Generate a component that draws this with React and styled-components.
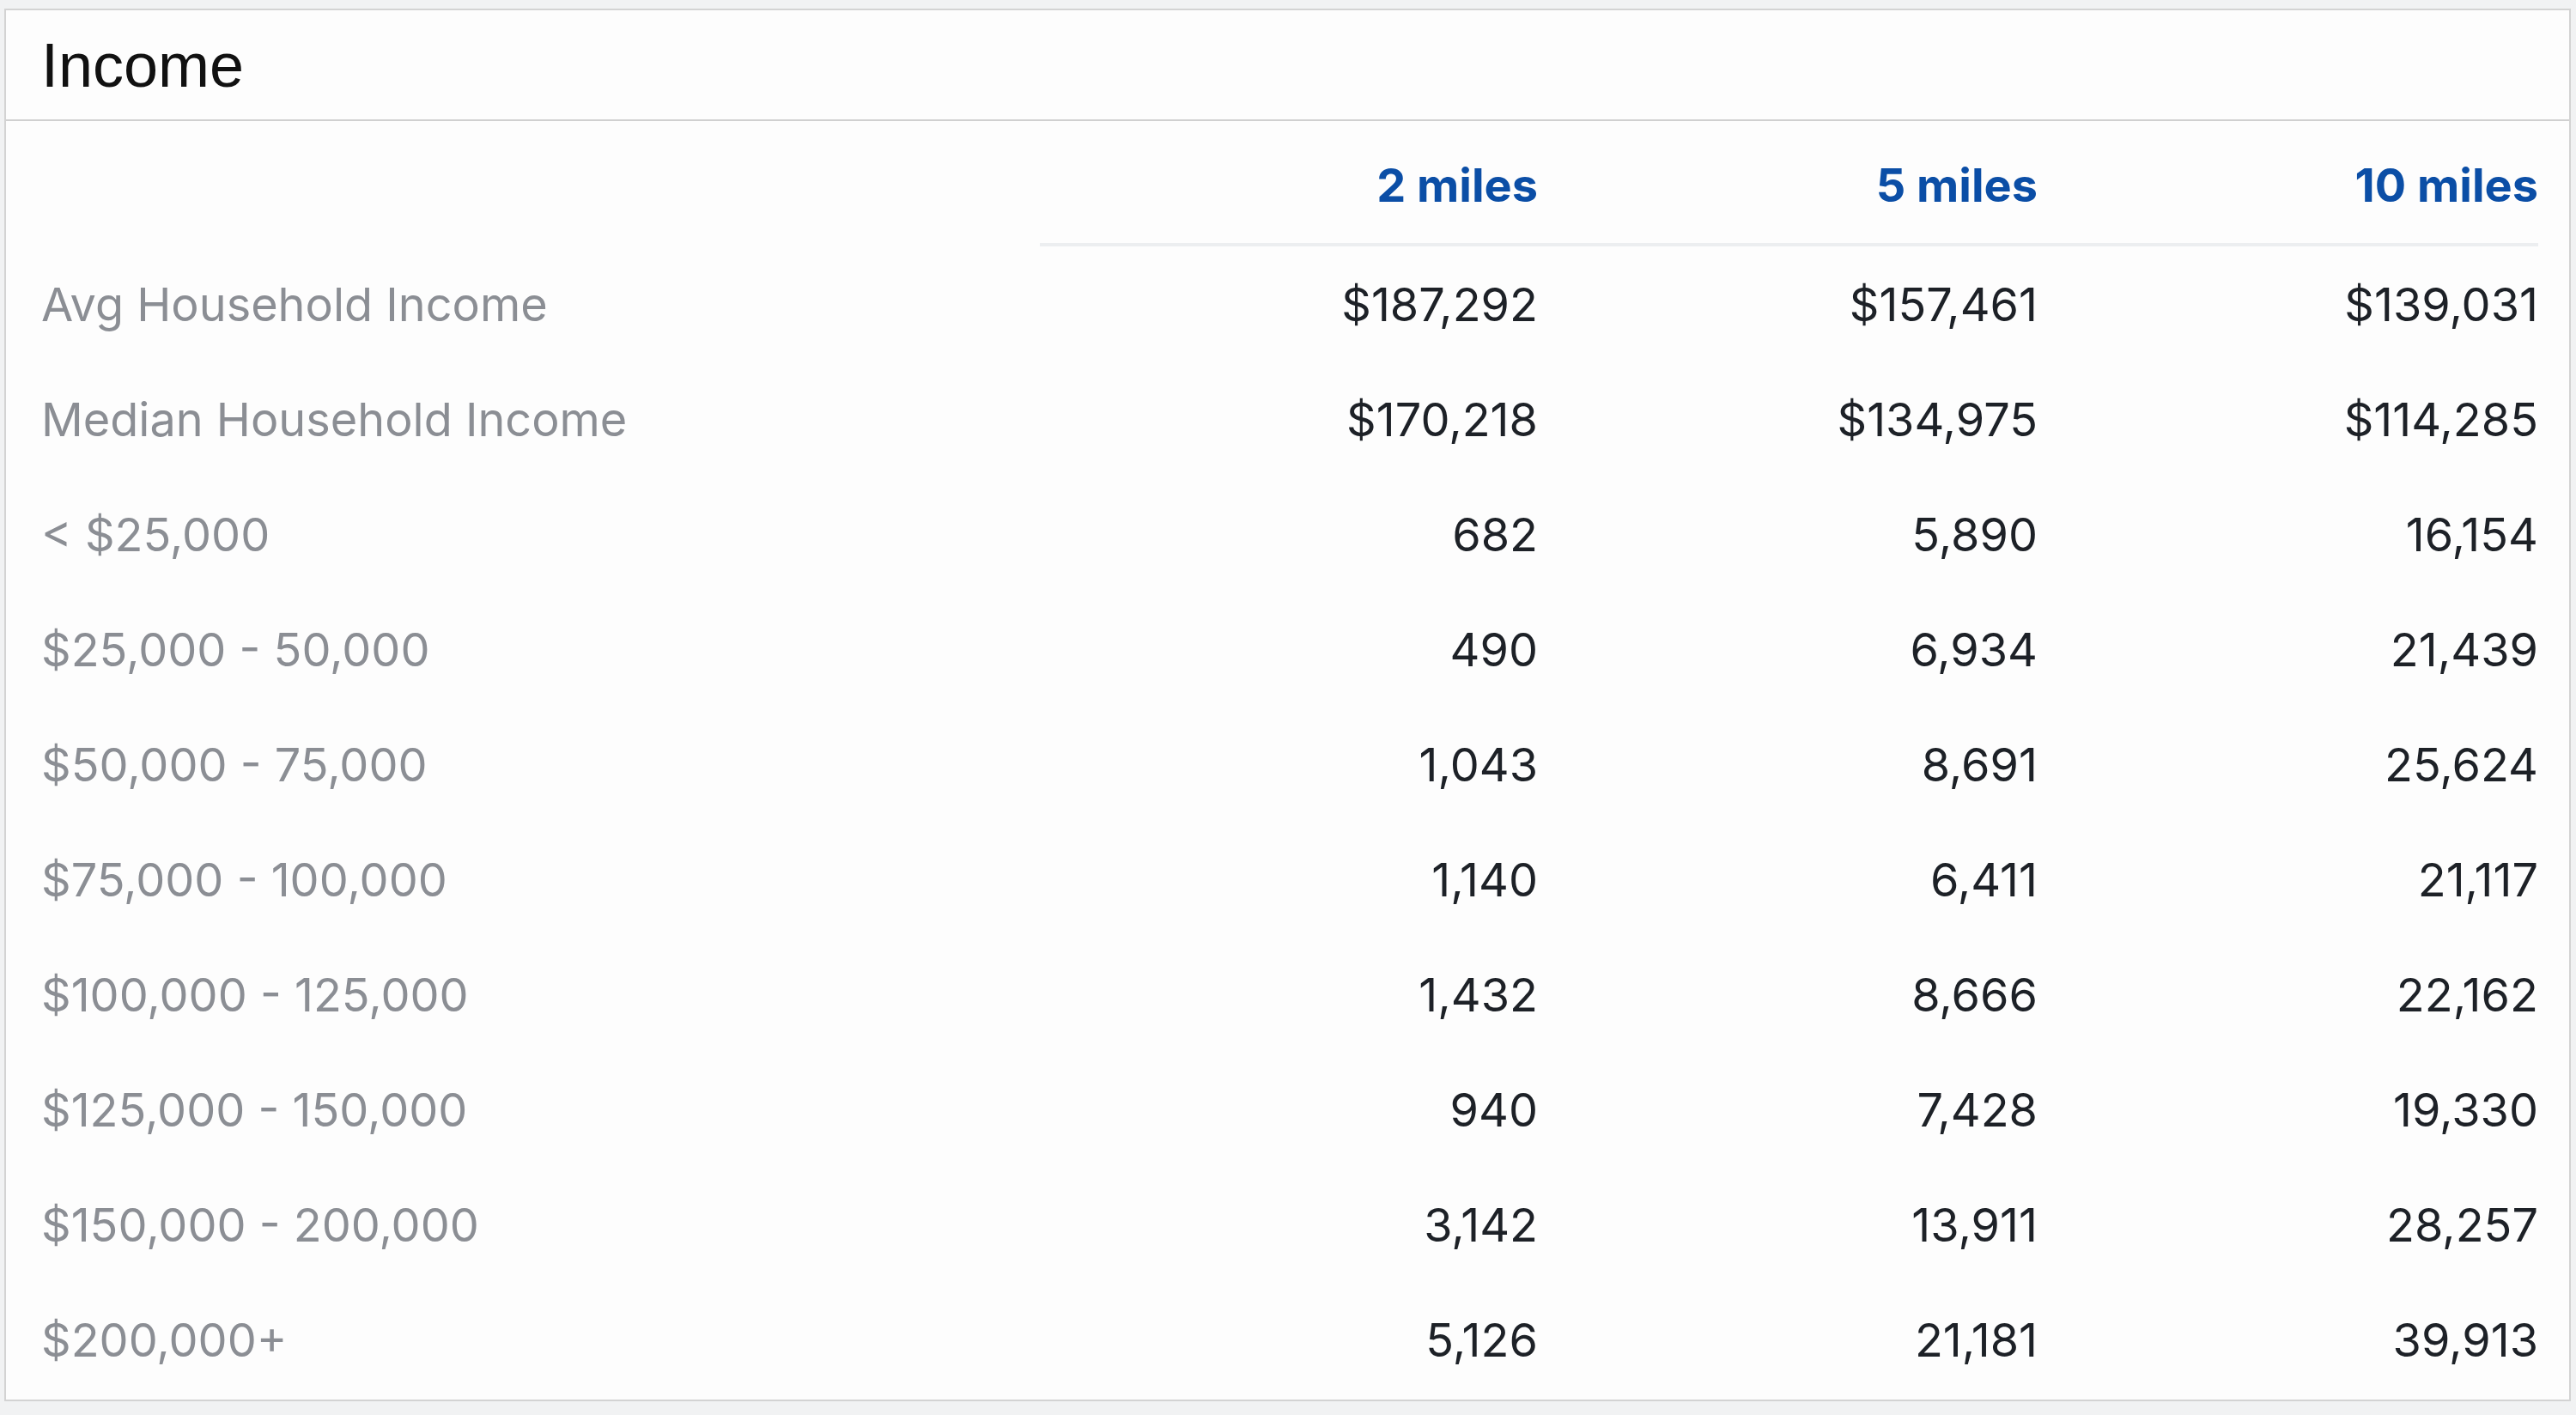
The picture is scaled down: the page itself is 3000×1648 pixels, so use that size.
import React from "react";
import styled, { createGlobalStyle } from "styled-components";

const GlobalStyle = createGlobalStyle`
  html, body {
    margin: 0;
    padding: 0;
    background: #f1f2f3;
  }
  body {
    font-family: Inter, "Liberation Sans", Arial, sans-serif;
  }
  * { box-sizing: border-box; }
`;

const Page = styled.div`
  width: 3000px;
  height: 1648px;
  padding: 10px 6px 0 5px;
`;

const Card = styled.section`
  width: 2989px;
  background: #fdfdfd;
  border: 2px solid #d3d3d3;
`;

const TitleBar = styled.header`
  height: 129px;
  border-bottom: 2px solid #d0d0d0;
  display: flex;
  align-items: center;
  padding-left: 41px;
`;

const Title = styled.h2`
  margin: 0;
  font-family: "Liberation Sans", Arial, sans-serif;
  font-weight: 400;
  font-size: 72px;
  color: #111;
  line-height: 1;
`;

const Table = styled.div`
  display: grid;
  grid-template-columns: 1163px 580px 582px 583px;
  padding: 0 36px 3px 41px;
`;

const HeadCell = styled.div`
  height: 146px;
  padding-top: 6px;
  display: flex;
  align-items: center;
  justify-content: ${(p) => (p.$num ? "flex-end" : "flex-start")};
  border-bottom: 4px solid ${(p) => (p.$num ? "#eceef0" : "transparent")};
  font-family: Inter, "Liberation Sans", Arial, sans-serif;
  font-size: 54px;
  font-weight: 700;
  color: #0b4ea6;
`;

const Cell = styled.div`
  height: 134px;
  display: flex;
  align-items: center;
  justify-content: ${(p) => (p.$num ? "flex-end" : "flex-start")};
  font-family: Inter, "Liberation Sans", Arial, sans-serif;
  font-size: 54px;
  color: ${(p) => (p.$num ? "#1d2127" : "#8b8e94")};
  white-space: nowrap;
`;

const columns = ["2 miles", "5 miles", "10 miles"];

const rows = [
  ["Avg Household Income", "$187,292", "$157,461", "$139,031"],
  ["Median Household Income", "$170,218", "$134,975", "$114,285"],
  ["< $25,000", "682", "5,890", "16,154"],
  ["$25,000 - 50,000", "490", "6,934", "21,439"],
  ["$50,000 - 75,000", "1,043", "8,691", "25,624"],
  ["$75,000 - 100,000", "1,140", "6,411", "21,117"],
  ["$100,000 - 125,000", "1,432", "8,666", "22,162"],
  ["$125,000 - 150,000", "940", "7,428", "19,330"],
  ["$150,000 - 200,000", "3,142", "13,911", "28,257"],
  ["$200,000+", "5,126", "21,181", "39,913"],
];

export default function App() {
  return (
    <>
      <GlobalStyle />
      <Page>
        <Card>
          <TitleBar>
            <Title>Income</Title>
          </TitleBar>
          <Table>
            <HeadCell />
            {columns.map((c) => (
              <HeadCell key={c} $num>
                {c}
              </HeadCell>
            ))}
            {rows.map((r) =>
              r.map((v, i) => (
                <Cell key={r[0] + i} $num={i > 0}>
                  {v}
                </Cell>
              ))
            )}
          </Table>
        </Card>
      </Page>
    </>
  );
}
